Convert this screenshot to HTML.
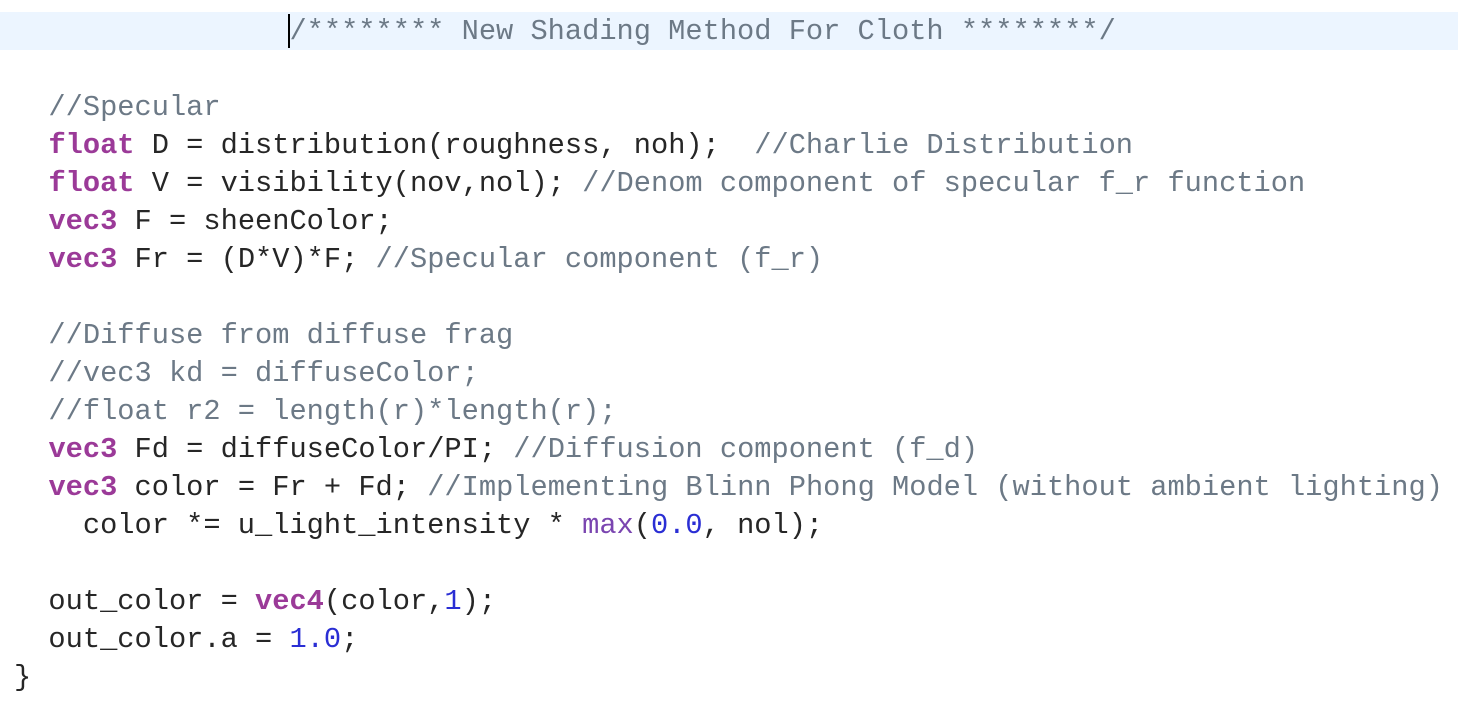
<!DOCTYPE html>
<html><head><style>
body{margin:0;background:#fff;width:1458px;height:704px;overflow:hidden}
.l{position:absolute;left:14px;height:38px;line-height:38px;font-family:"Liberation Mono",monospace;font-size:28.7px;white-space:pre;color:#262626}
.c{color:#6c7986}.k{color:#9b3a98;font-weight:bold}.n{color:#2a2ed4}.f{color:#7a45b0}
</style></head><body>
<div style="position:absolute;left:0;top:12px;width:1458px;height:38px;background:#ecf5ff"></div>
<div style="position:absolute;left:288px;top:14px;width:2px;height:34px;background:#000"></div>
<div class="l c" style="top:13px">                /******** New Shading Method For Cloth ********/</div>
<div class="l c" style="top:89px">  //Specular</div>
<div class="l" style="top:127px">  <span class="k">float</span> D = distribution(roughness, noh);  <span class="c">//Charlie Distribution</span></div>
<div class="l" style="top:165px">  <span class="k">float</span> V = visibility(nov,nol); <span class="c">//Denom component of specular f_r function</span></div>
<div class="l" style="top:203px">  <span class="k">vec3</span> F = sheenColor;</div>
<div class="l" style="top:241px">  <span class="k">vec3</span> Fr = (D*V)*F; <span class="c">//Specular component (f_r)</span></div>
<div class="l c" style="top:317px">  //Diffuse from diffuse frag</div>
<div class="l c" style="top:355px">  //vec3 kd = diffuseColor;</div>
<div class="l c" style="top:393px">  //float r2 = length(r)*length(r);</div>
<div class="l" style="top:431px">  <span class="k">vec3</span> Fd = diffuseColor/PI; <span class="c">//Diffusion component (f_d)</span></div>
<div class="l" style="top:469px">  <span class="k">vec3</span> color = Fr + Fd; <span class="c">//Implementing Blinn Phong Model (without ambient lighting)</span></div>
<div class="l" style="top:507px">    color *= u_light_intensity * <span class="f">max</span>(<span class="n">0.0</span>, nol);</div>
<div class="l" style="top:583px">  out_color = <span class="k">vec4</span>(color,<span class="n">1</span>);</div>
<div class="l" style="top:621px">  out_color.a = <span class="n">1.0</span>;</div>
<div class="l" style="top:659px">}</div>
</body></html>
